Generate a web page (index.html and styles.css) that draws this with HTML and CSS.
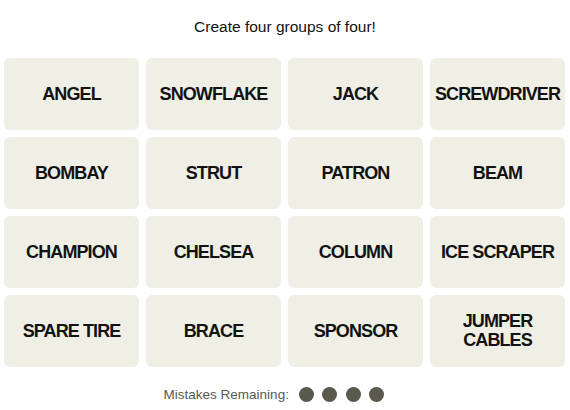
FILE: index.html
```html
<!doctype html>
<html lang="en">
<head>
  <meta charset="utf-8" />
  <meta name="viewport" content="width=device-width,initial-scale=1" />
  <title>Connections</title>
  <link rel="stylesheet" href="styles.css">
</head>
<body>
  <div class="game">
    <p class="prompt">Create four groups of four!</p>

    <div class="board">
      <button class="tile">ANGEL</button>
      <button class="tile">SNOWFLAKE</button>
      <button class="tile">JACK</button>
      <button class="tile">SCREWDRIVER</button>
      <button class="tile">BOMBAY</button>
      <button class="tile">STRUT</button>
      <button class="tile">PATRON</button>
      <button class="tile">BEAM</button>
      <button class="tile">CHAMPION</button>
      <button class="tile">CHELSEA</button>
      <button class="tile">COLUMN</button>
      <button class="tile">ICE SCRAPER</button>
      <button class="tile">SPARE TIRE</button>
      <button class="tile">BRACE</button>
      <button class="tile">SPONSOR</button>
      <button class="tile">JUMPER<br>CABLES</button>
    </div>

    <div class="mistakes">
      <span class="label">Mistakes Remaining:</span>
      <span class="dots">
        <span class="dot"></span>
        <span class="dot"></span>
        <span class="dot"></span>
        <span class="dot"></span>
      </span>
    </div>
  </div>
</body>
</html>
```

FILE: styles.css
```css
:root { --tile:#efefe6; --ink:#121212; --muted:#5a594e; }
html, body {
  margin: 0;
  background: #fff;
  color: var(--ink);
  font-family: "Liberation Sans", Arial, sans-serif;
}
.game { padding: 0 4px; }
.prompt {
  margin: 0;
  padding-top: 18px;
  height: 40px;
  text-align: center;
  font-size: 15.5px;
  line-height: 18px;
}
.board {
  display: grid;
  grid-template-columns: repeat(4, 135px);
  grid-auto-rows: 72px;
  gap: 7px;
}
.tile {
  display: flex; align-items: center; justify-content: center;
  border: 0; margin: 0; padding: 0 4px;
  background: var(--tile); color: var(--ink);
  border-radius: 6px;
  font-family: "Liberation Sans", Arial, sans-serif;
  font-weight: 700; font-size: 18px; line-height: 19px;
  letter-spacing: -0.9px;
  text-align: center;
  cursor: pointer;
}
.mistakes {
  display: flex; align-items: center; justify-content: center;
  gap: 10px;
  margin-top: 20px;
  padding-right: 22px;
}
.label { color: var(--muted); font-size: 13.5px; }
.dots { display: flex; gap: 8.5px; }
.dot { width: 15px; height: 15px; border-radius: 50%; background: var(--muted); }
```
